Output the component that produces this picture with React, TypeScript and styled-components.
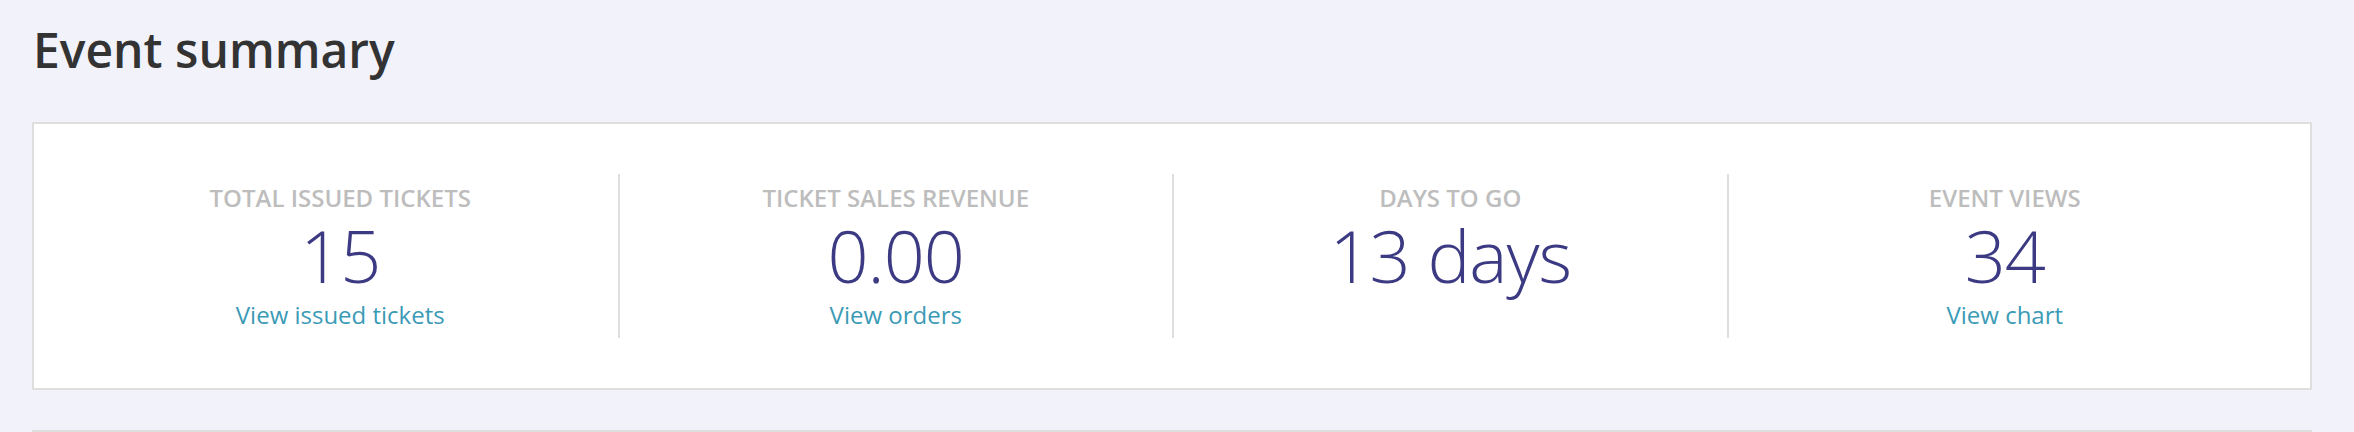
import styled, { createGlobalStyle } from "styled-components";

const GlobalStyle = createGlobalStyle`
  html, body {
    margin: 0;
    padding: 0;
    background: #f1f2fa;
    font-family: "Open Sans", "Noto Sans", sans-serif;
  }
`;

const stats = [
  { label: "Total issued tickets", value: "15", link: "View issued tickets" },
  { label: "Ticket sales revenue", value: "0.00", link: "View orders" },
  { label: "Days to go", value: "13 days" },
  { label: "Event views", value: "34", link: "View chart" },
];

const App = () => {
  return (
    <Page>
      <GlobalStyle />
      <Title>Event summary</Title>
      <SummaryCard>
        <StatGrid>
          {stats.map((s) => (
            <Stat key={s.label}>
              <Label>{s.label}</Label>
              <Value>{s.value}</Value>
              {s.link && <StatLink href="#">{s.link}</StatLink>}
            </Stat>
          ))}
        </StatGrid>
      </SummaryCard>
      <NextCard />
    </Page>
  );
};

const Page = styled.div`
  padding: 17px 42px 0 32px;
`;

const Title = styled.h1`
  margin: 0 0 40px 1px;
  font-size: 48px;
  line-height: 65px;
  font-weight: 600;
  color: #333333;
`;

const SummaryCard = styled.section`
  background: #ffffff;
  border: 2px solid #dedede;
  padding: 50px 29px;
`;

const StatGrid = styled.div`
  display: grid;
  grid-template-columns: repeat(4, 1fr);
`;

const Stat = styled.div`
  display: flex;
  flex-direction: column;
  align-items: center;
  padding: 7px 0;
  height: 164px;
  box-sizing: border-box;

  & + & {
    border-left: 2px solid #dedede;
  }
`;

const Label = styled.div`
  font-size: 24px;
  line-height: 33px;
  font-weight: 600;
  text-transform: uppercase;
  color: #bdbdbd;
`;

const Value = styled.div`
  margin-top: 5px;
  font-size: 72px;
  line-height: 72px;
  font-weight: 300;
  letter-spacing: -1px;
  color: #3c3a82;
`;

const StatLink = styled.a`
  margin-top: 7px;
  font-size: 24px;
  line-height: 33px;
  color: #3b9bb6;
  text-decoration: none;
`;

const NextCard = styled.div`
  margin-top: 40px;
  height: 120px;
  background: #ffffff;
  border: 2px solid #dedede;
`;

export default App;
